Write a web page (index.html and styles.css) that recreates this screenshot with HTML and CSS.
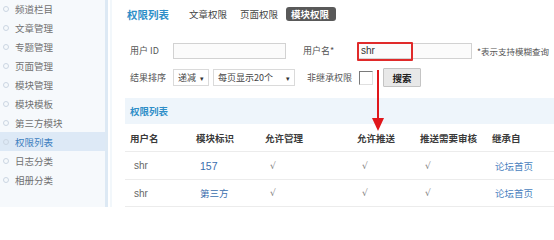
FILE: index.html
```html
<!DOCTYPE html>
<html lang="zh">
<head>
<meta charset="utf-8">
<title>权限列表</title>
<link rel="stylesheet" href="styles.css">
</head>
<body>
<div class="page">
  <aside class="side">
    <ul class="menu">
      <li>频道栏目</li>
      <li>文章管理</li>
      <li>专题管理</li>
      <li>页面管理</li>
      <li>模块管理</li>
      <li>模块模板</li>
      <li>第三方模块</li>
      <li class="active">权限列表</li>
      <li>日志分类</li>
      <li>相册分类</li>
    </ul>
  </aside>
  <main class="main">
    <div class="titlebar">
      <h1 class="title">权限列表</h1>
      <span class="tab">文章权限</span>
      <span class="tab">页面权限</span>
      <span class="tab tab-on">模块权限</span>
    </div>
    <div class="form">
      <div class="frow">
        <span class="lbl lbl1">用户 ID</span>
        <input class="inp inp-id" type="text">
        <span class="lbl lbl2">用户名*</span>
        <span class="inp-wrap">
          <input class="inp inp-name" type="text" value="shr">
          <span class="redbox"></span>
        </span>
        <span class="hint">*表示支持模糊查询</span>
      </div>
      <div class="frow frow2">
        <span class="lbl lbl1">结果排序</span>
        <div class="sel sel1"><span>递减</span><i class="caret">▾</i></div>
        <div class="sel sel2"><span>每页显示20个</span><i class="caret">▾</i></div>
        <span class="lbl lbl3">非继承权限</span>
        <span class="chk"></span>
        <span class="btn-wrap">
          <button class="btn">搜索</button>
          <svg class="arrow" width="14" height="62" viewBox="0 0 14 62">
            <line x1="7" y1="0" x2="7" y2="50" stroke="#e0161b" stroke-width="2"/>
            <polygon points="1,48 13,48 7,61" fill="#e0161b"/>
          </svg>
        </span>
      </div>
    </div>
    <div class="band">权限列表</div>
    <div class="table">
      <div class="tr th">
        <span class="c1">用户名</span><span class="c2">模块标识</span><span class="c3">允许管理</span><span class="c4">允许推送</span><span class="c5">推送需要审核</span><span class="c6">继承自</span>
      </div>
      <div class="tr td">
        <span class="c1 en">shr</span><span class="c2 link">157</span><span class="c3 ck">√</span><span class="c4 ck">√</span><span class="c5 ck">√</span><span class="c6 link2">论坛首页</span>
      </div>
      <div class="tr td">
        <span class="c1 en">shr</span><span class="c2 link cn">第三方</span><span class="c3 ck">√</span><span class="c4 ck">√</span><span class="c5 ck">√</span><span class="c6 link2">论坛首页</span>
      </div>
    </div>
  </main>
</div>
</body>
</html>
```

FILE: styles.css
```css
* { box-sizing: border-box; }
html, body {
  margin: 0;
  padding: 0;
  background: #fff;
  overflow: hidden;
}
body {
  font-family: "Noto Sans CJK SC", "Noto Sans", sans-serif;
  font-size: 9px;
  color: #555;
  width: 554px;
  height: 207px;
}
.page {
  display: flex;
  height: 207px;
}
.side {
  width: 108px;
  flex: none;
  background: #f6f9fc;
  border-right: 3px solid #dde9f4;
}
.menu {
  list-style: none;
  margin: -1px 0 0 0;
  padding: 0;
}
.menu li {
  height: 19px;
  padding-left: 13px;
  color: #707070;
  font-size: 9.5px;
  display: flex;
  align-items: center;
}
.menu li::before {
  content: "";
  flex: none;
  width: 4px;
  height: 4px;
  border: 1px solid #cbd6e2;
  border-radius: 50%;
  margin-left: -10px;
  margin-right: 6px;
}
.menu li.active {
  background: #dde9f6;
  color: #3d80c0;
}
.main {
  flex: 1;
  min-width: 0;
  padding-left: 15px;
  border-left: 2px solid #f2f7fb;
  margin-left: 2px;
}
.titlebar {
  height: 28px;
  display: flex;
  align-items: center;
}
.title {
  margin: 0;
  font-size: 10.5px;
  font-weight: bold;
  color: #2e8ec8;
  width: 62px;
}
.tab {
  font-size: 9.5px;
  color: #444;
  width: 51px;
}
.tab-on {
  width: 50px;
  background: #595959;
  color: #fff;
  border-radius: 3px;
  padding: 0 5px;
  height: 14px;
  line-height: 14px;
  font-weight: bold;
  margin-left: -5px;
}
.form {
  padding-top: 14px;
  padding-left: 3px;
}
.frow {
  display: flex;
  align-items: center;
  height: 17px;
  white-space: nowrap;
}
.frow2 {
  margin-top: 9px;
  height: 19px;
}
.lbl {
  color: #555;
  font-size: 9px;
  flex: none;
}
.lbl1 { width: 43px; }
.lbl2 { margin-left: 17px; width: 54px; }
.lbl3 { margin-left: 12px; width: 52px; }
.inp {
  flex: none;
  height: 16px;
  border: 1px solid #d2d2d2;
  background: #fbfbfb;
  font-family: "Liberation Sans", sans-serif;
  font-size: 10px;
  color: #333;
  padding: 0 3px;
  outline: none;
}
.inp-id { width: 113px; }
.inp-wrap {
  position: relative;
  display: inline-flex;
  flex: none;
}
.inp-name { width: 115px; }
.redbox {
  position: absolute;
  left: 0;
  top: -1px;
  width: 56px;
  height: 19px;
  border: 2px solid #e02a2a;
  border-radius: 1px;
}
.hint {
  margin-left: 5px;
  font-size: 8.5px;
  color: #555;
}
.sel {
  flex: none;
  height: 17px;
  border: 1px solid #dadada;
  background: #fff;
  display: flex;
  align-items: center;
  justify-content: space-between;
  padding: 0 4px 0 4px;
  font-size: 9px;
  color: #444;
}
.sel1 { width: 36px; }
.sel2 { width: 82px; margin-left: 4px; }
.caret {
  font-style: normal;
  font-size: 7px;
  color: #333;
}
.chk {
  flex: none;
  width: 14px;
  height: 14px;
  border: 1px solid #7a7a7a;
  border-right-color: #e0e0e0;
  border-bottom-color: #e0e0e0;
  background: #fff;
}
.btn-wrap {
  position: relative;
  display: inline-flex;
  margin-left: 10px;
}
.btn {
  width: 38px;
  height: 19px;
  padding: 0;
  border: 1px solid #c4c4c4;
  background: #e8e8e8;
  font-family: "Noto Sans CJK SC", sans-serif;
  font-size: 9.5px;
  color: #222;
  font-weight: bold;
  border-radius: 1px;
}
.arrow {
  position: absolute;
  left: -12px;
  top: 2px;
}
.band {
  margin-top: 11px;
  margin-left: -2px;
  height: 26px;
  line-height: 26px;
  background: #eef5fb;
  padding-left: 5px;
  font-size: 9.5px;
  font-weight: bold;
  color: #2e8ec8;
}
.table {
  margin-left: -2px;
}
.tr {
  display: flex;
  height: 28px;
  align-items: center;
  border-bottom: 1px solid #ececec;
  font-size: 9.5px;
  color: #666;
  white-space: nowrap;
}
.tr:last-child { height: 27px; }
.th {
  color: #3a3a3a;
  font-weight: bold;
}
.tr span { padding-left: 5px; flex: none; }
.td span { padding-left: 9px; }
.c1 { width: 66px; }
.c2 { width: 69px; }
.c3 { width: 92px; }
.c4 { width: 63px; }
.c5 { width: 72px; }
.c6 { width: 62px; }
.td span.c6 { padding-left: 8px; }
.td span.ck {
  padding-left: 10px;
  color: #808080;
  font-family: "DejaVu Sans", sans-serif;
  font-size: 9px;
}
.en { font-family: "Liberation Sans", sans-serif; font-size: 10px; color: #666; }
.link { color: #3a6eae; font-family: "Liberation Sans", sans-serif; font-size: 10.5px; }
.link.cn { font-family: "Noto Sans CJK SC", sans-serif; font-size: 9.5px; }
.link2 { color: #4a7fbe; }
```
